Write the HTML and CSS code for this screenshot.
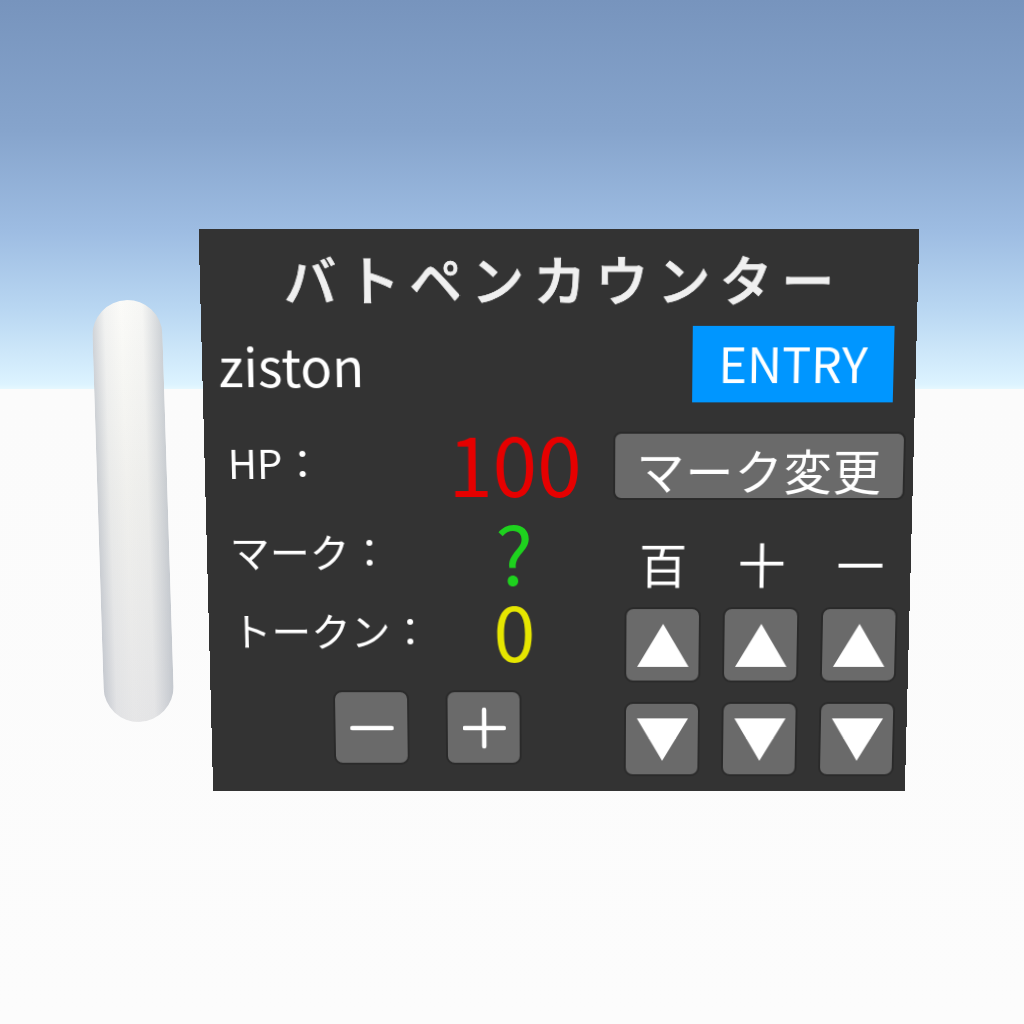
FILE: index.html
```html
<!DOCTYPE html>
<html lang="ja">
<head>
  <meta charset="UTF-8">
  <meta name="viewport" content="width=device-width, initial-scale=1.0">
  <title>バトペンカウンター</title>
  <link rel="stylesheet" href="styles.css">
</head>
<body>
  <div class="scene">
    <!-- pillar standing next to the board -->
    <div class="capsule"></div>

    <section class="panel">
      <h1 class="title">バトペンカウンター</h1>

      <div class="player-row">
        <span class="player-name">ziston</span>
        <button class="entry-button">ENTRY</button>
      </div>

      <div class="board">
        <!-- Left side: stats + token buttons -->
        <div class="stats">
          <div class="stat stat-hp">
            <span class="stat-label">HP：</span>
            <span class="stat-value hp">100</span>
          </div>
          <div class="stat stat-mark">
            <span class="stat-label">マーク：</span>
            <span class="stat-value mark">?</span>
          </div>
          <div class="stat stat-token">
            <span class="stat-label">トークン：</span>
            <span class="stat-value token">0</span>
          </div>

          <div class="token-buttons">
            <button class="pad-button">
              <svg width="44" height="44" viewBox="0 0 44 44"><line x1="2" y1="22" x2="42" y2="22" stroke="#fff" stroke-width="4.5" stroke-linecap="round"/></svg>
            </button>
            <button class="pad-button">
              <svg width="44" height="44" viewBox="0 0 44 44"><line x1="2" y1="22" x2="42" y2="22" stroke="#fff" stroke-width="4.5" stroke-linecap="round"/><line x1="22" y1="3" x2="22" y2="41" stroke="#fff" stroke-width="4.5" stroke-linecap="round"/></svg>
            </button>
          </div>
        </div>

        <!-- Right side: mark change + HP digit pad -->
        <div class="controls">
          <button class="mark-button">マーク変更</button>
          <div class="digit-heads">
            <span>百</span>
            <span>十</span>
            <span>一</span>
          </div>
          <div class="digit-pad">
            <button class="pad-button"><svg width="52" height="44" viewBox="0 0 52 44"><polygon points="26,0 52,44 0,44" fill="#fff"/></svg></button>
            <button class="pad-button"><svg width="52" height="44" viewBox="0 0 52 44"><polygon points="26,0 52,44 0,44" fill="#fff"/></svg></button>
            <button class="pad-button"><svg width="52" height="44" viewBox="0 0 52 44"><polygon points="26,0 52,44 0,44" fill="#fff"/></svg></button>
            <button class="pad-button"><svg width="52" height="44" viewBox="0 0 52 44"><polygon points="0,0 52,0 26,44" fill="#fff"/></svg></button>
            <button class="pad-button"><svg width="52" height="44" viewBox="0 0 52 44"><polygon points="0,0 52,0 26,44" fill="#fff"/></svg></button>
            <button class="pad-button"><svg width="52" height="44" viewBox="0 0 52 44"><polygon points="0,0 52,0 26,44" fill="#fff"/></svg></button>
          </div>
        </div>
      </div>
    </section>
  </div>
</body>
</html>
```

FILE: styles.css
```css
/* General */
body {
  margin: 0;
  padding: 0;
  font-family: "Noto Sans CJK JP", "Noto Sans", sans-serif;
}

button {
  font-family: inherit;
  border: none;
  padding: 0;
  margin: 0;
  cursor: pointer;
}

/* World: sky down to the horizon, white floor below */
.scene {
  position: relative;
  width: 1024px;
  height: 1024px;
  overflow: hidden;
  background: linear-gradient(180deg,
    #7794bd 0px,
    #86a4cc 130px,
    #9dbce2 230px,
    #b9d7f2 310px,
    #dcf3ff 384px,
    #e6f8ff 389px,
    #fbfbfb 389px,
    #fcfcfc 1024px);
}

.capsule {
  position: absolute;
  left: 98px;
  top: 300px;
  width: 70px;
  height: 422px;
  border-radius: 35px;
  transform: rotate(-1.8deg);
  background:
    linear-gradient(90deg,
      rgba(165, 172, 184, 0.5) 0%,
      rgba(205, 209, 216, 0.2) 18%,
      rgba(255, 255, 250, 0) 42%,
      rgba(210, 213, 218, 0.12) 72%,
      rgba(160, 168, 180, 0.5) 100%),
    linear-gradient(180deg, #fbfbf8 0%, #f0f0ed 45%, #e6e6e7 100%);
}

/* Board, tipped slightly back */
.panel {
  position: absolute;
  left: 206px;
  top: 234px;
  width: 706px;
  height: 563px;
  background-color: #333333;
  color: #ffffff;
  transform: perspective(1000px) rotateX(-4.2deg);
}

.title {
  margin: 0;
  height: 94px;
  display: flex;
  align-items: center;
  justify-content: center;
  padding-left: 9px;
  font-size: 52px;
  font-weight: 500;
  letter-spacing: 9px;
  color: #f0f0f0;
  -webkit-text-stroke: 0.8px #f0f0f0;
}

.player-row {
  height: 75px;
  display: flex;
  align-items: center;
  justify-content: space-between;
  padding: 0 22px 0 16px;
}

.player-name {
  font-size: 52px;
}

.entry-button {
  width: 199px;
  height: 75px;
  padding-bottom: 6px;
  background-color: #0096ff;
  color: #ffffff;
  font-size: 48px;
}

.board {
  display: flex;
  margin-top: 11px;
}

/* Stats column */
.stats {
  width: 407px;
}

.stat {
  display: grid;
  grid-template-columns: 200px 170px;
  align-items: center;
  padding-left: 23px;
}

.stat-hp { height: 96px; }
.stat-mark { height: 82px; }
.stat-token { height: 78px; }

.stat-label {
  font-size: 40px;
}

.stat-value {
  justify-self: center;
  font-size: 80px;
  line-height: 1;
}

.stat-value.hp { color: #e60000; padding-left: 2px; }
.stat-value.mark { color: #1ed21e; }
.stat-value.token { color: #e6e600; font-size: 76px; }

.token-buttons {
  display: flex;
  gap: 37px;
  margin-top: 23px;
  padding-left: 124px;
}

/* Controls column */
.controls {
  width: 291px;
  padding-top: 18px;
}

.mark-button {
  width: 291px;
  height: 68px;
  border-radius: 8px;
  border: 2px solid #2a2a2a;
  background-color: #6a6a6a;
  color: #ffffff;
  font-size: 48px;
  letter-spacing: 1px;
}

.digit-heads {
  display: grid;
  grid-template-columns: repeat(3, 77px);
  column-gap: 22px;
  margin: 28px 0 0 12px;
  height: 62px;
  align-items: center;
  justify-items: center;
  font-size: 48px;
}

.digit-pad {
  display: grid;
  grid-template-columns: repeat(3, 77px);
  grid-auto-rows: 77px;
  column-gap: 22px;
  row-gap: 20px;
  margin: 18px 0 0 12px;
}

.pad-button {
  width: 77px;
  height: 77px;
  display: flex;
  align-items: center;
  justify-content: center;
  border-radius: 9px;
  border: 2px solid #2a2a2a;
  background-color: #6a6a6a;
}
```
